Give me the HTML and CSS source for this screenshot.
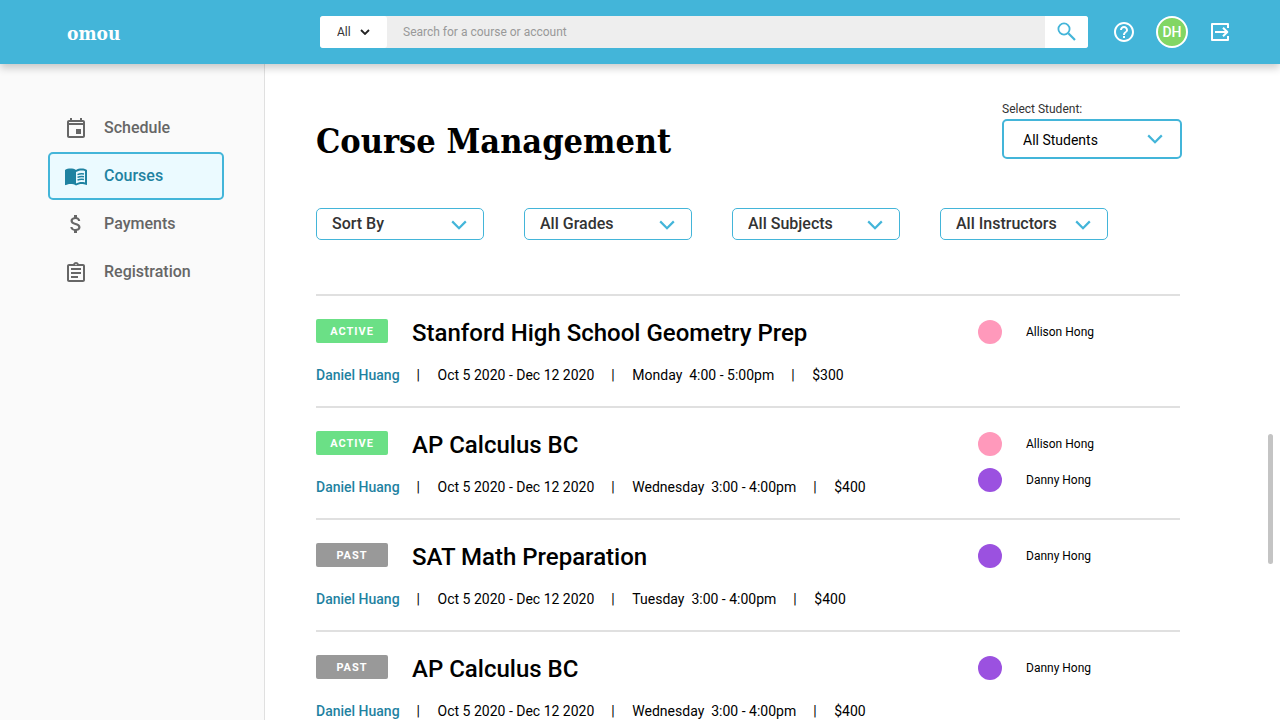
FILE: index.html
```html
<!DOCTYPE html>
<html lang="en">
<head>
<meta charset="utf-8">
<meta name="viewport" content="width=device-width, initial-scale=1">
<title>Course Management - omou</title>
<link rel="stylesheet" href="styles.css">
</head>
<body>
<svg class="sprite" aria-hidden="true">
  <symbol id="chevron" viewBox="0 0 16 10"><path d="M1.2 1.4 8 8.2l6.8-6.8" fill="none" stroke="currentColor" stroke-width="2.2"/></symbol>
</svg>

<header class="topbar">
  <a class="logo" href="#">omou</a>
  <form class="search" role="search">
    <div class="select search-scope">
      <select aria-label="Search scope"><option>All</option></select>
      <svg class="chevron" viewBox="0 0 10 6" aria-hidden="true"><path d="M1 1l4 4 4-4" fill="none" stroke="currentColor" stroke-width="1.8"/></svg>
    </div>
    <input class="search-input" type="search" placeholder="Search for a course or account" aria-label="Search for a course or account">
    <button class="search-button" type="button" aria-label="Search">
      <svg class="icon" viewBox="0 0 24 24"><circle cx="9" cy="9" r="5.600" fill="none" stroke="currentColor" stroke-width="1.800"/><path d="m13.300 13.300 6.700 6.700" fill="none" stroke="currentColor" stroke-width="2.200"/></svg>
    </button>
  </form>
  <div class="actions">
    <button class="action" type="button" aria-label="Help">
      <svg class="icon" viewBox="0 0 24 24" fill="currentColor"><path d="M11 18h2v-2h-2v2zm1-16C6.48 2 2 6.48 2 12s4.48 10 10 10 10-4.48 10-10S17.52 2 12 2zm0 18c-4.41 0-8-3.59-8-8s3.59-8 8-8 8 3.59 8 8-3.59 8-8 8zm0-14c-2.21 0-4 1.79-4 4h2c0-1.1.9-2 2-2s2 .9 2 2c0 2-3 1.75-3 5h2c0-2.25 3-2.5 3-5 0-2.21-1.79-4-4-4z"/></svg>
    </button>
    <button class="avatar" type="button" aria-label="Account DH">DH</button>
    <button class="action" type="button" aria-label="Log out">
      <svg class="icon" viewBox="0 0 24 24" fill="none" stroke="currentColor" stroke-width="2" stroke-linejoin="round"><path d="M20 8V4H4v16h16v-4M7 12h12M15 7.700l4.300 4.300-4.300 4.300"/></svg>
    </button>
  </div>
</header>

<div class="layout">
  <nav class="sidebar" aria-label="Main">
    <a class="nav-item" href="#">
      <svg class="icon" viewBox="0 -1 24 24" fill="currentColor"><path d="M17 12h-5v5h5v-5zM16 1v2H8V1H6v2H5c-1.11 0-1.99.9-1.99 2L3 19c0 1.1.89 2 2 2h14c1.1 0 2-.9 2-2V5c0-1.100-.9-2-2-2h-1V1h-2zm3 18H5V8h14v11zM5 5h14v1H5V5z" fill-rule="evenodd"/></svg>
      <span class="nav-label">Schedule</span>
    </a>
    <a class="nav-item nav-item-current" href="#" aria-current="page">
      <svg class="icon" viewBox="0 0 24 24" fill="currentColor"><path fill-rule="evenodd" d="M21 5c-1.110-.35-2.330-.5-3.500-.5-1.950 0-4.050.4-5.500 1.500-1.450-1.100-3.550-1.500-5.500-1.500S2.450 4.900 1 6v14.650c0 .25.25.5.5.5.1 0 .15-.05.25-.05C3.100 20.450 5.050 20 6.500 20c1.950 0 4.050.4 5.500 1.500 1.350-.85 3.800-1.500 5.500-1.500 1.650 0 3.350.3 4.750 1.050.1.050.15.050.25.050.25 0 .5-.25.5-.5V6c-.6-.45-1.250-.75-2-1zm0 13.500c-1.100-.35-2.300-.5-3.500-.5-1.700 0-4.150.65-5.500 1.500V8c1.350-.85 3.800-1.500 5.500-1.500 1.200 0 2.400.15 3.500.5v11.500z"/><path d="M13.500 10.700c1.800-.9 4.200-1.100 6.500-.7M13.500 13.400c1.800-.9 4.200-1.100 6.500-.7M13.500 16.100c1.800-.9 4.200-1.100 6.500-.7" fill="none" stroke="currentColor" stroke-width="1.500"/></svg>
      <span class="nav-label">Courses</span>
    </a>
    <a class="nav-item" href="#">
      <svg class="icon" viewBox="0 0 24 24" fill="currentColor"><path d="M11.800 10.900c-2.270-.59-3-1.200-3-2.150 0-1.090 1.010-1.850 2.700-1.850 1.780 0 2.440.85 2.500 2.100h2.210c-.07-1.720-1.120-3.300-3.210-3.810V3h-3v2.160c-1.940.42-3.500 1.680-3.500 3.610 0 2.310 1.910 3.460 4.700 4.130 2.500.6 3 1.480 3 2.410 0 .69-.49 1.790-2.700 1.790-2.060 0-2.870-.92-2.980-2.100h-2.200c.12 2.190 1.760 3.420 3.680 3.830V21h3v-2.150c1.950-.37 3.500-1.500 3.500-3.550 0-2.840-2.430-3.810-4.700-4.400z"/></svg>
      <span class="nav-label">Payments</span>
    </a>
    <a class="nav-item" href="#">
      <svg class="icon" viewBox="0 -1 24 24" fill="currentColor"><path d="M7 15h7v2H7zm0-4h10v2H7zm0-4h10v2H7zm12-4h-4.180C14.400 1.840 13.300 1 12 1c-1.300 0-2.400.84-2.820 2H5c-1.100 0-2 .9-2 2v14c0 1.100.9 2 2 2h14c1.100 0 2-.9 2-2V5c0-1.100-.9-2-2-2zm-7-.25c.41 0 .75.34.75.75s-.34.75-.75.75-.75-.34-.75-.75.34-.75.75-.75zM19 19H5V5h14v14z"/></svg>
      <span class="nav-label">Registration</span>
    </a>
  </nav>

  <main class="content">
    <div class="page-head">
      <h1 class="page-title">Course Management</h1>
      <div class="student-filter">
        <label class="student-label" for="student">Select Student:</label>
        <div class="select student-select">
          <select id="student"><option>All Students</option></select>
          <svg class="chevron" aria-hidden="true"><use href="#chevron"/></svg>
        </div>
      </div>
    </div>

    <div class="filters">
      <div class="select filter">
        <select aria-label="Sort by"><option>Sort By</option></select>
        <svg class="chevron" aria-hidden="true"><use href="#chevron"/></svg>
      </div>
      <div class="select filter">
        <select aria-label="Grades"><option>All Grades</option></select>
        <svg class="chevron" aria-hidden="true"><use href="#chevron"/></svg>
      </div>
      <div class="select filter">
        <select aria-label="Subjects"><option>All Subjects</option></select>
        <svg class="chevron" aria-hidden="true"><use href="#chevron"/></svg>
      </div>
      <div class="select filter">
        <select aria-label="Instructors"><option>All Instructors</option></select>
        <svg class="chevron" aria-hidden="true"><use href="#chevron"/></svg>
      </div>
    </div>

    <ul class="courses">
      <li class="course">
        <div class="course-main">
          <div class="course-head"><span class="badge badge-active">ACTIVE</span><h2 class="course-title">Stanford High School Geometry Prep</h2></div>
          <div class="course-meta"><a class="teacher" href="#">Daniel Huang</a><span class="bar">|</span><span>Oct 5 2020 - Dec 12 2020</span><span class="bar">|</span><span>Monday&nbsp; 4:00 - 5:00pm</span><span class="bar">|</span><span>$300</span></div>
        </div>
        <ul class="students">
          <li class="student"><span class="dot dot-pink"></span>Allison Hong</li>
        </ul>
      </li>
      <li class="course">
        <div class="course-main">
          <div class="course-head"><span class="badge badge-active">ACTIVE</span><h2 class="course-title">AP Calculus BC</h2></div>
          <div class="course-meta"><a class="teacher" href="#">Daniel Huang</a><span class="bar">|</span><span>Oct 5 2020 - Dec 12 2020</span><span class="bar">|</span><span>Wednesday&nbsp; 3:00 - 4:00pm</span><span class="bar">|</span><span>$400</span></div>
        </div>
        <ul class="students">
          <li class="student"><span class="dot dot-pink"></span>Allison Hong</li>
          <li class="student"><span class="dot dot-purple"></span>Danny Hong</li>
        </ul>
      </li>
      <li class="course">
        <div class="course-main">
          <div class="course-head"><span class="badge badge-past">PAST</span><h2 class="course-title">SAT Math Preparation</h2></div>
          <div class="course-meta"><a class="teacher" href="#">Daniel Huang</a><span class="bar">|</span><span>Oct 5 2020 - Dec 12 2020</span><span class="bar">|</span><span>Tuesday&nbsp; 3:00 - 4:00pm</span><span class="bar">|</span><span>$400</span></div>
        </div>
        <ul class="students">
          <li class="student"><span class="dot dot-purple"></span>Danny Hong</li>
        </ul>
      </li>
      <li class="course">
        <div class="course-main">
          <div class="course-head"><span class="badge badge-past">PAST</span><h2 class="course-title">AP Calculus BC</h2></div>
          <div class="course-meta"><a class="teacher" href="#">Daniel Huang</a><span class="bar">|</span><span>Oct 5 2020 - Dec 12 2020</span><span class="bar">|</span><span>Wednesday&nbsp; 3:00 - 4:00pm</span><span class="bar">|</span><span>$400</span></div>
        </div>
        <ul class="students">
          <li class="student"><span class="dot dot-purple"></span>Danny Hong</li>
        </ul>
      </li>
    </ul>
    <div class="scroll-thumb"></div>
  </main>
</div>
</body>
</html>
```

FILE: styles.css
```css
* { box-sizing: border-box; }

body {
  margin: 0;
  height: 100vh;
  display: flex;
  flex-direction: column;
  overflow: hidden;
  background: #fff;
  color: #000;
  font-family: Roboto, "Liberation Sans", sans-serif;
  font-size: 14px;
}

a { color: inherit; text-decoration: none; }
ul { margin: 0; padding: 0; list-style: none; }
button { border: 0; padding: 0; background: none; color: inherit; font-family: inherit; }
select, input { font-family: inherit; }

.sprite { display: none; }
.icon { display: block; width: 24px; height: 24px; flex: none; }

/* Top bar */
.topbar {
  position: relative;
  z-index: 1;
  flex: none;
  display: flex;
  align-items: center;
  gap: 24px;
  height: 64px;
  padding: 0 48px 0 67px;
  background: #43b5d9;
  color: #fff;
  box-shadow: 0 4px 8px rgba(0, 0, 0, 0.2);
}

.logo {
  width: 229px;
  padding-top: 2px;
  font-family: "Roboto Slab", "DejaVu Serif Condensed", "DejaVu Serif", serif;
  font-size: 19px;
  font-weight: 700;
}

.search {
  flex: 1;
  display: flex;
  height: 32px;
  border-radius: 3px;
  overflow: hidden;
  background: #eee;
}

.select { position: relative; }

.select select {
  appearance: none;
  width: 100%;
  height: 100%;
  border: 0;
  background: none;
  color: inherit;
  font-size: inherit;
  font-weight: inherit;
}

.chevron {
  position: absolute;
  right: 16px;
  top: 50%;
  width: 16px;
  height: 10px;
  margin-top: -5px;
  color: #43b5d9;
  pointer-events: none;
}

.search-scope { width: 67px; border-radius: 3px; background: #fff; color: #333; font-size: 12px; }
.search-scope select { padding: 0 17px; }
.search-scope .chevron { width: 10px; height: 6px; margin-top: -3px; right: 17px; color: #222; }

.search-input {
  flex: 1;
  min-width: 0;
  border: 0;
  padding: 0 16px;
  background: #eee;
  font-size: 12px;
}
.search-input::placeholder { color: #999; }
.search-button { display: flex; align-items: center; justify-content: center; width: 43px; background: #fff; color: #43b5d9; }

.actions { display: flex; align-items: center; gap: 20px; }
.avatar {
  width: 32px;
  height: 32px;
  border: 2px solid #fff;
  border-radius: 50%;
  background: #82d664;
  font-size: 14px;
  font-weight: 500;
}

/* Sidebar */
.layout { flex: 1; min-height: 0; display: flex; }

.sidebar {
  flex: none;
  width: 265px;
  padding: 40px 40px 0 48px;
  border-right: 1px solid #e0e0e0;
  background: #fafafa;
}

.nav-item {
  display: flex;
  align-items: center;
  gap: 16px;
  width: 176px;
  height: 48px;
  padding: 0 14px;
  border: 2px solid transparent;
  border-radius: 5px;
  color: #666;
  font-size: 16px;
  font-weight: 500;
}
.nav-item-current { border-color: #43b5d9; background: #ebfaff; color: #1f82a1; }
.nav-label { padding-bottom: 2px; }

/* Content */
.content {
  position: relative;
  flex: 1;
  min-width: 0;
  overflow: hidden;
  padding: 37px 98px 0 51px;
}

.page-head { display: flex; justify-content: space-between; }

.page-title {
  margin: 16px 0 0;
  font-family: "Roboto Slab", "DejaVu Serif Condensed", "DejaVu Serif", serif;
  font-size: 34px;
  line-height: 48px;
  font-weight: 700;
}

.student-filter { width: 180px; }
.student-label { display: block; height: 18px; color: #333; font-size: 12px; line-height: 16px; }
.student-select { height: 40px; border: 2px solid #43b5d9; border-radius: 5px; }
.student-select select { padding: 2px 19px 0; }
.student-select .chevron { right: 17px; }

.filters { display: flex; gap: 40px; margin-top: 43px; }
.filter {
  width: 168px;
  height: 32px;
  border: 1px solid #43b5d9;
  border-radius: 5px;
  color: #333;
  font-size: 16px;
  font-weight: 500;
}
.filter select { padding: 0 15px 1px; }
.filter .chevron { margin-top: -4px; }

/* Course list */
.courses { margin: 54px 2px 0 0; }

.course {
  display: grid;
  grid-template-columns: 1fr 202px;
  height: 112px;
  border-top: 2px solid #e0e0e0;
}

.course-main { padding-top: 23px; }
.course-head { display: flex; align-items: flex-start; gap: 24px; }

.badge {
  width: 72px;
  height: 24px;
  border-radius: 2px;
  color: #fff;
  font-size: 11px;
  font-weight: 700;
  line-height: 26px;
  letter-spacing: 1px;
  text-align: center;
}
.badge-active { background: #6be086; }
.badge-past { background: #999; }

.course-title { margin: 0; font-size: 24px; font-weight: 500; line-height: 28px; }

.course-meta { display: flex; gap: 17px; margin-top: 18px; line-height: 20px; white-space: nowrap; }
.bar { width: 4px; }
.teacher { color: #1f82a1; font-weight: 500; }

.students { display: flex; flex-direction: column; gap: 12px; padding-top: 24px; }
.student { display: flex; align-items: center; gap: 24px; font-size: 12px; }
.dot { width: 24px; height: 24px; border-radius: 50%; }
.dot-pink { background: #ff99bb; }
.dot-purple { background: #9b51e0; }

.scroll-thumb {
  position: absolute;
  right: 7px;
  top: 370px;
  width: 5px;
  height: 130px;
  border-radius: 3px;
  background: #c4c4c4;
}
```
